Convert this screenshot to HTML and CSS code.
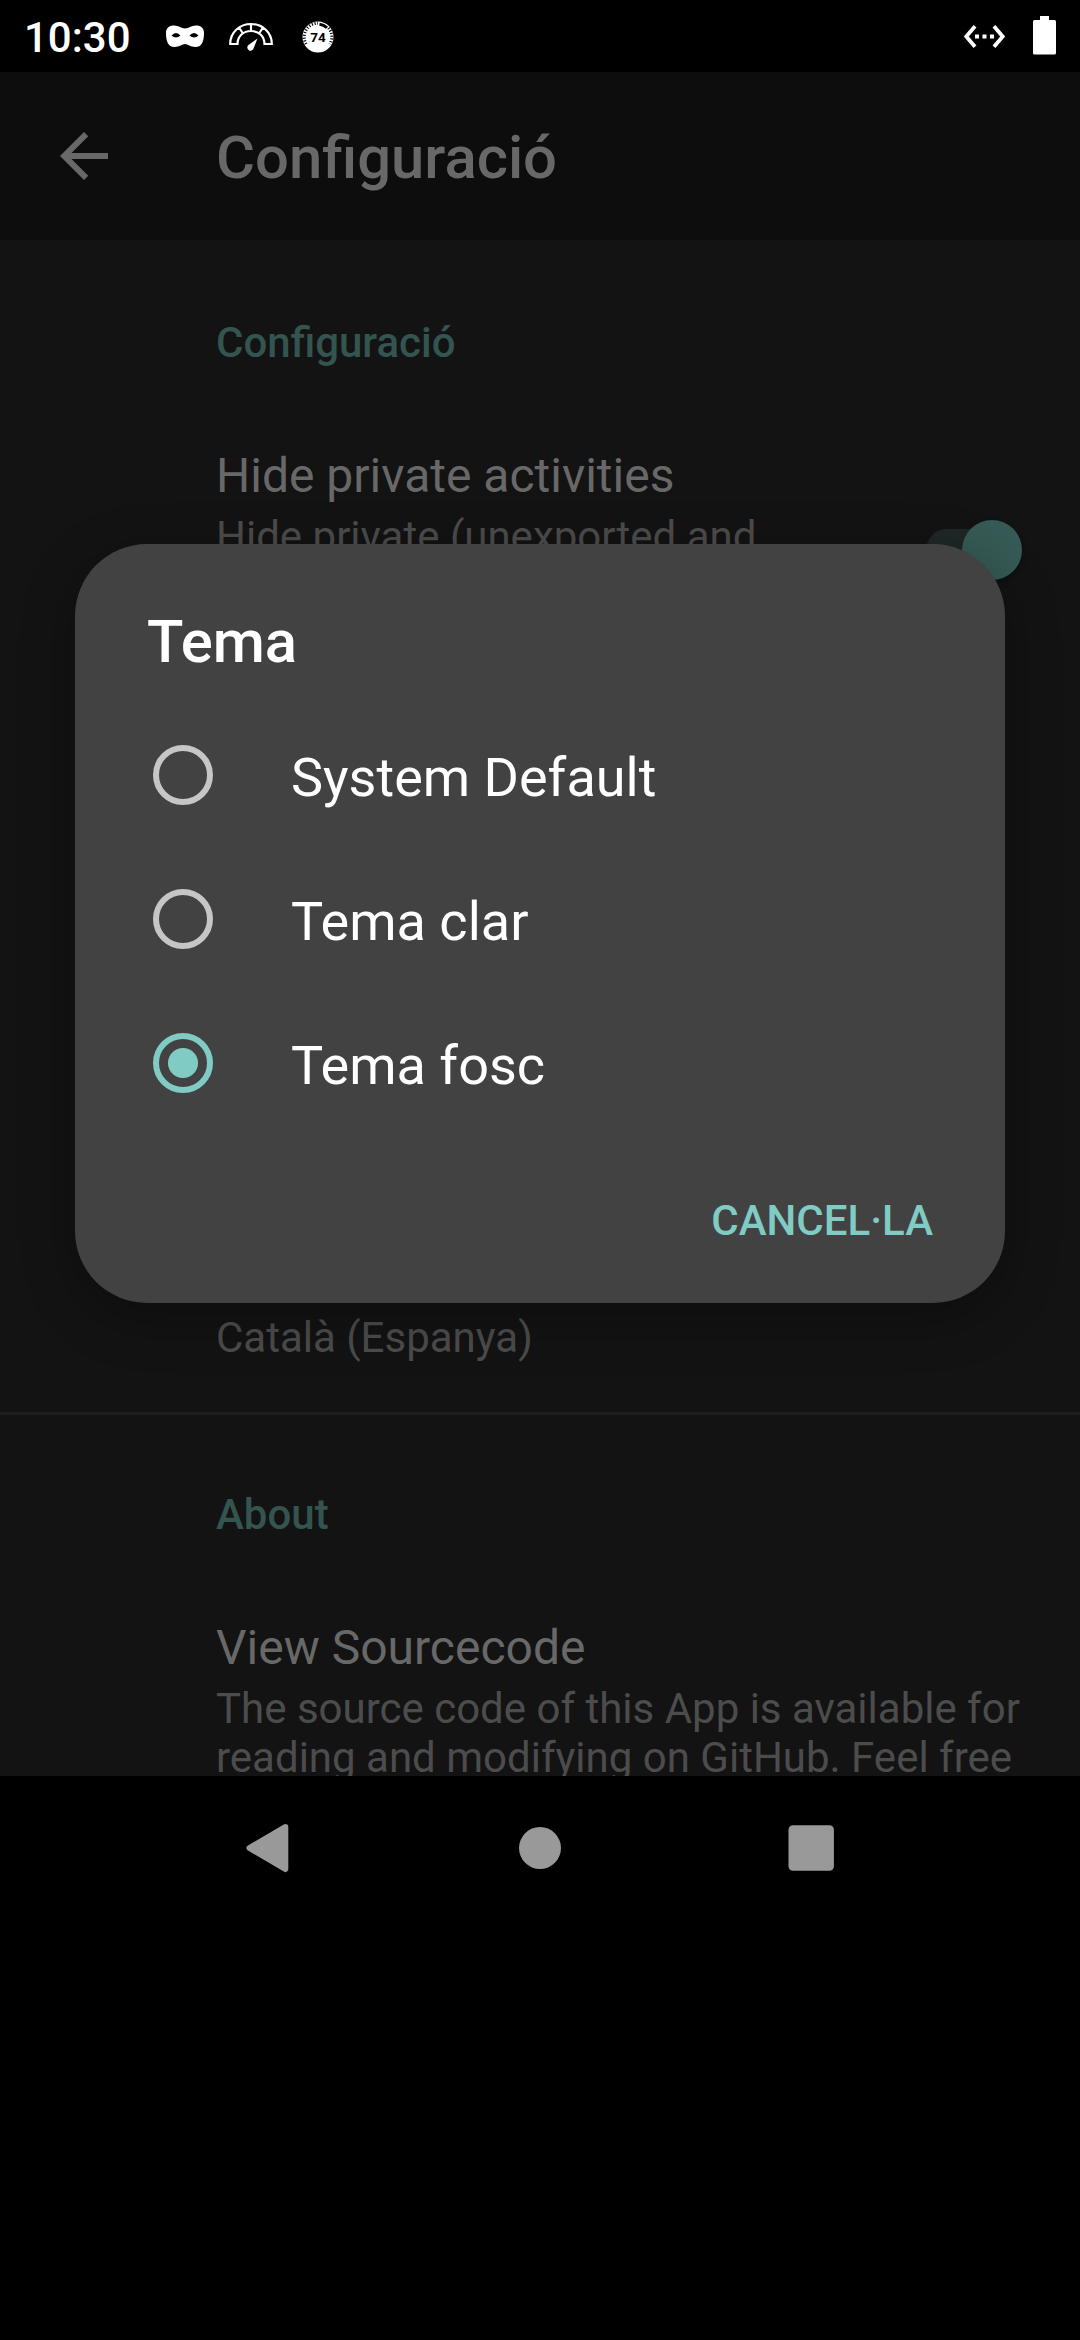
FILE: index.html
```html
<!DOCTYPE html>
<html lang="ca">
<head>
<meta charset="utf-8">
<title>Configuració</title>
<link rel="stylesheet" href="styles.css">
</head>
<body>
<div class="screen">
  <header class="status">
    <span class="clock">10:30</span>
    <svg class="mask" width="40" height="26" viewBox="0 0 40 26">
      <path fill="#fff" fill-rule="evenodd" d="M9 1.500C14 1.500 16 4.500 20 4.500S26 1.500 31 1.500C36 1.500 39 4 39 9C39 17 37 23 30.500 23C25 23 23 20 20 20S15 23 9.500 23C3 23 1 17 1 9C1 4 4 1.500 9 1.500ZM6.500 11.500Q11 6.500 15.500 11.500Q11 15.500 6.500 11.500ZM24.500 11.500Q29 6.500 33.500 11.500Q29 15.500 24.500 11.500Z"/>
    </svg>
    <svg class="gauge" width="44" height="30" viewBox="0 0 44 30">
      <path fill="none" stroke="#fff" stroke-width="2.200" d="M1.200 22C1.200 10 11 2 22 2S42.800 10 42.800 22H35.500C35.500 14 29.500 9 22 9S8.500 14 8.500 22ZM22 2V9M10 5.500L14 11.500M34 5.500L30 11.500"/>
      <path fill="#fff" d="M28.500 16.500L24.500 26.500A3.200 3.200 0 1 1 19.200 23.200Z"/>
    </svg>
    <svg class="badge" width="32" height="32" viewBox="0 0 32 32">
      <circle cx="16" cy="16" r="15.500" fill="#fff"/>
      <path fill="none" stroke="#000" stroke-width="3" stroke-dasharray="1.100 1.700" d="M4.100 23A13.800 13.800 0 0 1 16 2.200"/>
      <path fill="none" stroke="#000" stroke-width="3" d="M17.500 3.200A12.900 12.900 0 0 1 25 6.800"/>
      <path fill="none" stroke="#000" stroke-width="3" stroke-dasharray="1.100 1.700" d="M26.500 7A13.800 13.800 0 0 1 27.900 23"/>
      <text x="16" y="20.800" class="badge-text">74</text>
    </svg>
    <svg class="ethernet" width="44" height="26" viewBox="0 0 44 26">
      <path fill="none" stroke="#fff" stroke-width="3.800" d="M12 2.300L3.300 12.500L12 22.700M31 2.300L39.700 12.500L31 22.700"/>
      <path fill="#fff" d="M12 10.500h4v4h-4zM19.500 10.500h4v4h-4zM27 10.500h4v4h-4z"/>
    </svg>
    <svg class="battery" width="23" height="39" viewBox="0 0 23 39">
      <path fill="#fff" d="M7 0h9v4h5.500q1.500 0 1.500 1.500v31.500q0 1.500-1.500 1.500h-20q-1.500 0-1.500-1.500v-31.500q0-1.500 1.500-1.500h5.500z"/>
    </svg>
  </header>

  <div class="appbar">
    <svg width="48" height="48" viewBox="0 0 16 16">
      <path fill="#686868" d="M16 7H3.830l5.590-5.590L8 0 0 8l8 8 1.410-1.410L3.830 9H16V7z"/>
    </svg>
    <h1 class="appbar-title">Configuració</h1>
  </div>

  <main class="settings">
    <section class="group group-main">
      <h2 class="category">Configuració</h2>
      <div class="pref-row">
        <div class="pref">
          <div class="pref-title">Hide private activities</div>
          <div class="summary">Hide private (unexported and</div>
        </div>
        <div class="switch"><div class="thumb"></div></div>
      </div>
      <div class="summary language">Català (Espanya)</div>
    </section>
    <section class="group group-about">
      <h2 class="category">About</h2>
      <div class="pref">
        <div class="pref-title">View Sourcecode</div>
        <div class="summary">The source code of this App is available for<br>reading and modifying on GitHub. Feel free</div>
      </div>
    </section>
  </main>

  <nav class="navbar">
    <svg width="48" height="54" viewBox="2 0 48 54"><path fill="#999" stroke="#999" stroke-width="6" stroke-linejoin="round" d="M42.300 6L6.500 27L42.300 48Z"/></svg>
    <svg width="48" height="54" viewBox="0 0 48 54"><circle cx="24" cy="27" r="21" fill="#999"/></svg>
    <svg width="48" height="54" viewBox="0 0 48 54"><rect x="1.500" y="4.300" width="45.400" height="45.400" rx="4.500" fill="#999"/></svg>
  </nav>

  <div class="dialog" role="dialog">
    <h2 class="dialog-title">Tema</h2>
    <div class="option"><span class="radio"></span><span>System Default</span></div>
    <div class="option"><span class="radio"></span><span>Tema clar</span></div>
    <div class="option"><span class="radio radio-on"></span><span>Tema fosc</span></div>
    <div class="actions"><span>CANCEL·LA</span></div>
  </div>
</div>
</body>
</html>
```
FILE: styles.css
```css
* { box-sizing: border-box; }
body { margin: 0; background: #000; font-family: Roboto, sans-serif; }
h1, h2 { margin: 0; font-weight: 500; }
svg { display: block; flex: none; }

.screen { position: relative; width: 1080px; height: 2340px; overflow: hidden; background: #000; }

.status { display: flex; align-items: flex-start; height: 72px; padding-left: 24px; padding-right: 24px; color: #fff; }
.clock { width: 141px; padding-top: 13px; font-size: 42px; line-height: 50px; font-weight: 500; }
.mask { margin-top: 24px; }
.gauge { margin: 22px 0 0 24px; }
.badge { margin: 21px 0 0 29px; }
.badge-text { font-size: 13.500px; font-weight: 700; text-anchor: middle; fill: #000; }
.ethernet { margin: 24px 0 0 auto; }
.battery { margin: 16px 0 0 26px; }

.appbar { display: flex; align-items: center; height: 168px; padding-left: 60px; background: #0d0d0d; }
.appbar-title { margin-left: 108px; padding-top: 4px; font-size: 59.800px; line-height: 70px; color: #686868; }

.settings { height: 1536px; overflow: hidden; background: #131313; }
.group { display: flex; flex-direction: column; padding: 75px 60px 50px 216px; border-top: 3px solid #1e1e1e; }
.group-main { height: 1172px; border-top-color: #131313; }
.category { margin-bottom: 81px; font-size: 42px; line-height: 49px; color: #345450; }
.pref-row { display: flex; justify-content: space-between; align-items: flex-start; }
.pref-title { margin-bottom: 8px; font-size: 48px; line-height: 56px; color: #686868; }
.summary { font-size: 42px; line-height: 49px; color: #4c4c4c; white-space: nowrap; }
.language { margin-top: auto; }
.switch { display: flex; justify-content: flex-end; align-items: center; width: 94px; height: 42px; margin-top: 81px; border-radius: 21px; background: #1f2827; }
.thumb { flex: none; width: 60px; height: 60px; margin-right: -2px; border-radius: 50%; background: #365a55; box-shadow: 0 3px 6px rgba(0, 0, 0, .25); }

.navbar { display: flex; justify-content: space-between; align-items: center; height: 144px; padding: 0 245px; }

.dialog { position: absolute; left: 75px; top: 544px; width: 930px; height: 759px; padding: 63px 72px 43px; border-radius: 72px; background: #424242; color: #fff; box-shadow: 0 14px 54px rgba(0, 0, 0, .3); }
.dialog-title { height: 96px; font-size: 59.800px; line-height: 70px; }
.option { display: flex; align-items: center; gap: 78px; height: 144px; padding-left: 6px; font-size: 54px; line-height: 64px; }
.option span:last-child { padding-top: 5px; }
.radio { width: 60px; height: 60px; border: 6px solid #c6c6c6; border-radius: 50%; }
.radio-on { border-color: #80cbc4; background: radial-gradient(circle, #80cbc4 14.500px, transparent 15.500px); }
.actions { display: flex; justify-content: flex-end; padding-top: 61px; font-size: 42px; line-height: 49px; font-weight: 500; color: #80cbc4; }
```
